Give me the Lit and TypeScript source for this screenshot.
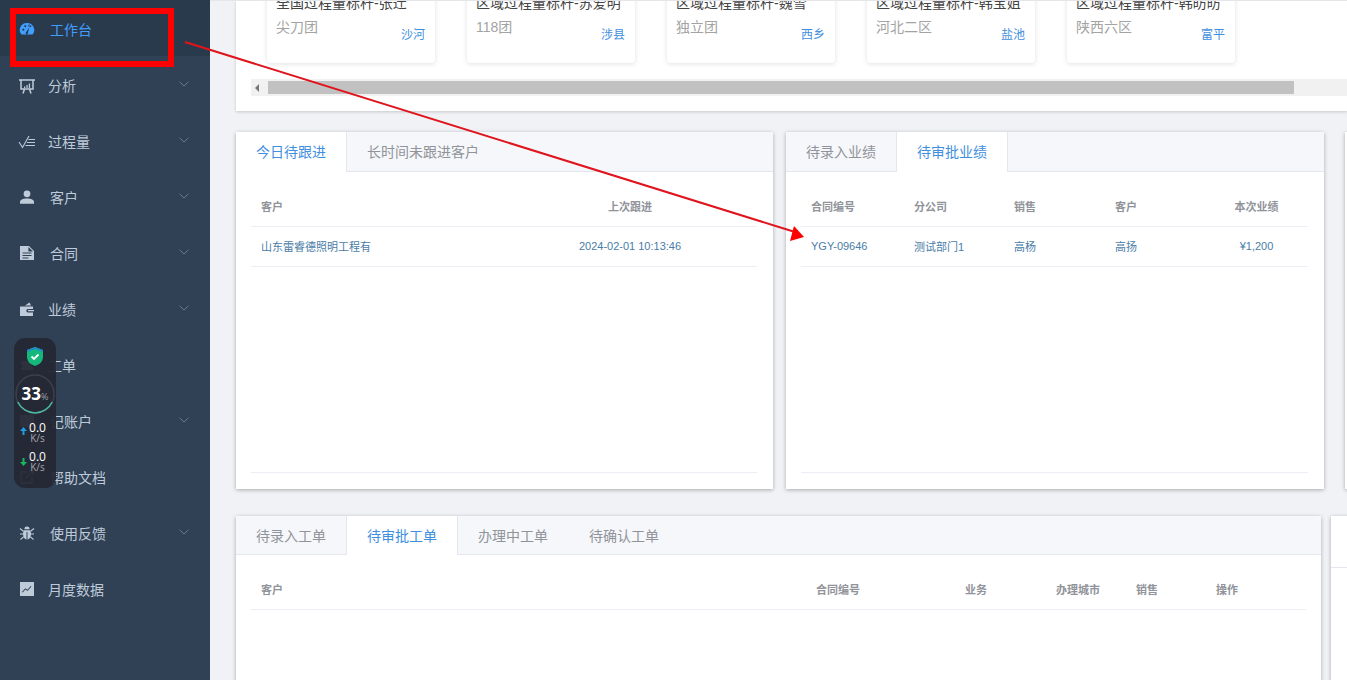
import { LitElement, html, css, svg } from 'lit';
import { customElement } from 'lit/decorators.js';

const chevron = html`<svg class="chev" viewBox="0 0 10 6"><path d="M.5.8 5 5 9.5.8" fill="none" stroke="currentColor" stroke-width=".8"/></svg>`;

const icons: Record<string, unknown> = {
  gauge: svg`<path fill-rule="evenodd" d="M7 1A7 7 0 0 0 1.500 12.600h11A7 7 0 0 0 7 1ZM2.200 7.600a1.100 1.100 0 1 1 0 .1ZM4.300 4a1 1 0 1 1 0 .1Zm4 -.4a1 1 0 1 1 0 .1Zm1 .4a1 1 0 1 1 0 .1ZM6 10.200 9.300 5.600 8 10.600a1.200 1.200 0 1 1-2-.4Z"/>`,
  board: svg`<path fill="none" stroke="currentColor" stroke-width="1.500" d="M-1 2h16M1 2.500v8.500h12V2.500M3 15.500l1.500-4.500M11 15.500 9.500 11"/><path d="M4 8.500h1.300V10H4zM6.400 7h1.300v3H6.400zM8.800 5.500h1.300V10H8.800z"/>`,
  check: svg`<path fill="none" stroke="currentColor" stroke-width="1.100" d="M-1 8l3.500 5.500L9 2M8.500 5.500h6.500M7 8.500h8M5.500 11.500h9.500"/>`,
  user: svg`<circle cx="7" cy="3.800" r="3.400"/><path d="M0 13.800V12c0-2.200 2.600-3.600 7-3.600s7 1.400 7 3.600v1.800Z"/>`,
  doc: svg`<path fill-rule="evenodd" d="M0 0h9l5 5v9H0Zm8.400 1v4.600H13ZM2.500 6.500v1h9v-1Zm0 2.600v1h9v-1Zm0 2.400v1h6v-1Z"/>`,
  wallet: svg`<path d="M5 3.500 9.500.5 11 3.500Z"/><path fill-rule="evenodd" d="M0 4.500h13v2.500H8a1.700 1.700 0 0 0 0 3.400h5V14H0Zm8 3.400h6v1.400H8Z"/>`,
  ticket: svg`<path d="M1 3h12v3a1.500 1.500 0 0 0 0 3v3H1V9a1.500 1.500 0 0 0 0-3Z"/>`,
  account: svg`<path d="M0 1h14v12H0Z"/>`,
  link: svg`<path fill="none" stroke="currentColor" stroke-width="1.300" d="M7 2H1v11h11V7M6 8l7-7M9 1h4v4"/>`,
  bug: svg`<path d="M4.400 3.200a2.600 2.600 0 0 1 5.200 0ZM3.800 4.200h6.400c.6 1 .8 2.200.8 3.600 0 3.200-1.500 5.400-3.500 5.700V6H6.500v7.500C4.500 13.200 3 11 3 7.800c0-1.400.2-2.600.8-3.600Z"/><path fill="none" stroke="currentColor" stroke-width="1.100" d="M0 2.500l3.400 2.700M14 2.500l-3.400 2.700M0 8h3M11 8h3M.5 13.500l3.300-2.800M13.500 13.500l-3.300-2.800"/>`,
  chart: svg`<path fill-rule="evenodd" d="M0 0h14v14H0Zm2.500 10.600 3-3 2 1.500 4-4.500-.7-.6-3.400 3.800-2-1.500-3.600 3.600Z"/>`,
};

const menu = [
  { icon: 'gauge', label: '工作台', gap: 16, active: true },
  { icon: 'board', label: '分析', gap: 14, more: true },
  { icon: 'check', label: '过程量', gap: 14, more: true },
  { icon: 'user', label: '客户', gap: 16, more: true },
  { icon: 'doc', label: '合同', gap: 16, more: true },
  { icon: 'wallet', label: '业绩', gap: 14, more: true },
  { icon: 'ticket', label: '工单', gap: 14 },
  { icon: 'account', label: '记账户', gap: 16, more: true },
  { icon: 'link', label: '帮助文档', gap: 16 },
  { icon: 'bug', label: '使用反馈', gap: 16, more: true },
  { icon: 'chart', label: '月度数据', gap: 14 },
];

const tiles = [
  ['全国过程量标杆-张迁', '尖刀团', '沙河'],
  ['区域过程量标杆-苏爱明', '118团', '涉县'],
  ['区域过程量标杆-魏雪', '独立团', '西乡'],
  ['区域过程量标杆-韩宝姐', '河北二区', '盐池'],
  ['区域过程量标杆-韩昉昉', '陕西六区', '富平'],
];

@customElement('app-root')
export class AppRoot extends LitElement {
  static styles = css`
    :host {
      display: flex;
      position: relative;
      width: 1347px;
      height: 680px;
      overflow: hidden;
      background: #f0f2f5;
      font-family: "Liberation Sans", "Noto Sans CJK SC", sans-serif;
    }
    .side {
      width: 210px;
      flex: none;
      background: #304156;
      color: #bfcbd9;
      font-size: 14px;
    }
    .item {
      height: 56px;
      display: flex;
      align-items: center;
      padding: 2px 0 0 20px;
      box-sizing: border-box;
      position: relative;
    }
    .item.active {
      background: #2a3a4d;
      color: #409eff;
    }
    .item .ic {
      width: 14px;
      height: 14px;
      fill: currentColor;
      flex: none;
      overflow: visible;
    }
    .chev {
      position: absolute;
      left: 179px;
      top: 25px;
      width: 10px;
      height: 6px;
      color: #7d8a9b;
    }
    .main {
      flex: 1;
      min-width: 0;
      padding-left: 26px;
      overflow: hidden;
      border-top: 1px solid #e4e6ea;
      box-sizing: border-box;
    }
    .top {
      height: 110px;
      background: #fff;
      box-shadow: 0 1px 3px rgba(0, 0, 0, .18);
      padding-left: 15px;
      overflow: hidden;
    }
    .tiles {
      display: flex;
      gap: 32px;
      margin: -38px 0 0 16px;
    }
    .tile {
      width: 168px;
      height: 100px;
      flex: none;
      box-sizing: border-box;
      padding: 30px 10px 0 9px;
      background: #fff;
      border-radius: 4px;
      box-shadow: 0 1px 5px rgba(0, 0, 0, .12);
    }
    .tile .t { font-size: 14px; line-height: 20px; color: #444; white-space: nowrap; }
    .tile .row { display: flex; justify-content: space-between; margin-top: 4px; }
    .tile .s { font-size: 14px; line-height: 20px; color: #a3a3a3; }
    .tile .c { font-size: 12px; line-height: 20px; color: #3f8fe0; margin-top: 8px; }
    .bar {
      margin-top: 16px;
      height: 17px;
      background: #f1f1f1;
      display: flex;
      align-items: center;
    }
    .bar i {
      width: 0;
      height: 0;
      margin: 0 6px 0 4px;
      border: 4px solid transparent;
      border-right: 4px solid #777;
      border-left: 0;
    }
    .bar b {
      margin-left: 3px;
      width: 1026px;
      height: 13px;
      background: #c1c1c1;
    }
    .row2 {
      display: flex;
      margin-top: 21px;
      height: 357px;
    }
    .row3 {
      display: flex;
      margin-top: 27px;
      height: 300px;
    }
    .panel {
      flex: none;
      background: #fff;
      box-shadow: 0 1px 4px rgba(0, 0, 0, .3);
      box-sizing: border-box;
    }
    .tabs {
      display: flex;
      height: 40px;
      background: #f5f7fa;
      border-bottom: 1px solid #e4e7ed;
      box-sizing: border-box;
      font-size: 14px;
      color: #909399;
    }
    .row3 .tabs { height: 39px; }
    .tabs span {
      min-width: 110.500px;
      box-sizing: border-box;
      padding: 0 20px;
      line-height: 40px;
      height: 40px;
      white-space: nowrap;
      border-right: 1px solid transparent;
    }
    .row3 .tabs span { height: 39px; }
    .tabs span.on {
      background: #fff;
      color: #3f8fe0;
      border-right-color: #e4e7ed;
    }
    .tabs span.on:not(:first-child) { box-shadow: -1px 0 0 #e4e7ed; }
    .tbl {
      margin: 0 15px;
      font-size: 11px;
      display: grid;
    }
    .tbl > div {
      border-bottom: 1px solid #ebeef5;
      padding-left: 10px;
      display: flex;
      align-items: center;
      white-space: nowrap;
    }
    .tbl .h { height: 55px; padding-top: 14px; box-sizing: border-box; color: #909399; font-weight: bold; }
    .tbl .d { height: 40px; padding-bottom: 2px; box-sizing: border-box; color: #4a7ca8; }
    .tbl .ctr { justify-content: center; padding-left: 0; }
    .tbl .end { grid-column: 1 / -1; height: 206px; box-sizing: border-box; }
    .t1 { grid-template-columns: 252px 254px; }
    .t2 { grid-template-columns: 103px 100px 101px 100px 103px; }
    .t3 { grid-template-columns: 555px 149px 91px 80px 80px 100px; }
    .overlay {
      position: absolute;
      left: 0;
      top: 0;
      width: 1347px;
      height: 680px;
      pointer-events: none;
    }
    .widget {
      position: absolute;
      left: 14px;
      top: 338px;
      width: 42px;
      height: 150px;
      border-radius: 11px;
      background: rgba(36, 39, 51, .94);
      color: #fff;
    }
    .widget svg { position: absolute; }
    .pct {
      position: absolute;
      left: 0;
      width: 42px;
      top: 45px;
      text-align: center;
      font: bold 17px/22px "Open Sans", "Liberation Sans", sans-serif;
    }
    .pct small { font-size: 9px; font-weight: normal; color: #9a9ca5; }
    .speed {
      position: absolute;
      left: 11px;
      width: 25px;
      text-align: center;
      font: 12px/10px "Open Sans", "Liberation Sans", sans-serif;
    }
    .speed small { display: block; font-size: 10px; line-height: 10px; color: #a3a5ad; }
  `;

  private tabs(names: string[], on: number) {
    return html`<div class="tabs">
      ${names.map((n, i) => html`<span class="${i === on ? 'on' : ''}">${n}</span>`)}
    </div>`;
  }

  render() {
    return html`
      <nav class="side">
        ${menu.map(m => html`<div class="item ${m.active ? 'active' : ''}">
          <svg class="ic" viewBox="0 0 14 14">${icons[m.icon]}</svg>
          <span style="margin-left:${m.gap}px">${m.label}</span>
          ${m.more ? chevron : ''}
        </div>`)}
      </nav>
      <main class="main">
        <section class="top">
          <div class="tiles">
            ${tiles.map(t => html`<div class="tile">
              <div class="t">${t[0]}</div>
              <div class="row"><span class="s">${t[1]}</span><span class="c">${t[2]}</span></div>
            </div>`)}
          </div>
          <div class="bar"><i></i><b></b></div>
        </section>
        <div class="row2">
          <section class="panel" style="width:537px">
            ${this.tabs(['今日待跟进', '长时间未跟进客户'], 0)}
            <div class="tbl t1">
              <div class="h">客户</div><div class="h ctr">上次跟进</div>
              <div class="d">山东雷睿德照明工程有</div><div class="d ctr">2024-02-01 10:13:46</div>
              <div class="end"></div>
            </div>
          </section>
          <section class="panel" style="width:538px;margin-left:13px">
            ${this.tabs(['待录入业绩', '待审批业绩'], 1)}
            <div class="tbl t2">
              <div class="h">合同编号</div><div class="h">分公司</div><div class="h">销售</div><div class="h">客户</div><div class="h ctr">本次业绩</div>
              <div class="d">YGY-09646</div><div class="d">测试部门1</div><div class="d">高杨</div><div class="d">高扬</div><div class="d ctr">¥1,200</div>
              <div class="end"></div>
            </div>
          </section>
          <section class="panel" style="width:200px;margin-left:21px"></section>
        </div>
        <div class="row3">
          <section class="panel" style="width:1085px">
            ${this.tabs(['待录入工单', '待审批工单', '办理中工单', '待确认工单'], 1)}
            <div class="tbl t3">
              <div class="h">客户</div><div class="h">合同编号</div><div class="h">业务</div><div class="h">办理城市</div><div class="h">销售</div><div class="h">操作</div>
            </div>
          </section>
          <section class="panel" style="width:200px;margin-left:10px"><div class="tabs" style="background:#fff;height:52px"></div></section>
        </div>
      </main>
      <svg class="overlay" viewBox="0 0 1347 680">
        <rect x="13" y="11" width="158" height="53" fill="none" stroke="#f00" stroke-width="6"/>
        <path d="M185 42 795 232" stroke="#e0141c" stroke-width="2"/>
        <path d="M804 237 794 226 790 241Z" fill="#f00"/>
      </svg>
      <div class="widget">
        <svg style="left:13px;top:9px" width="16" height="19" viewBox="0 0 16 19">
          <path d="M8 0 16 3v7c0 4.500-3.500 7.500-8 9-4.500-1.500-8-4.500-8-9V3Z" fill="#14b87a"/>
          <path d="M8 0 16 3v2L8 2 0 5V3Z" fill="#2388c8"/>
          <path d="M4.500 9.500 7 12l4.500-4.500" fill="none" stroke="#fff" stroke-width="1.800"/>
        </svg>
        <svg style="left:0;top:35px" width="42" height="42" viewBox="0 0 42 42">
          <circle cx="21" cy="21" r="19" fill="none" stroke="#3d404b" stroke-width="1.500"/>
          <path d="M3.800 29A19 19 0 0 0 38.200 29" fill="none" stroke="#4dbb9f" stroke-width="1.500"/>
        </svg>
        <div class="pct">33<small>%</small></div>
        <svg style="left:6px;top:89px" width="7" height="8" viewBox="0 0 7 8"><path d="M3.500 0 7 4H4.500v4h-2V4H0Z" fill="#1e9ce0"/></svg>
        <div class="speed" style="top:85px">0.0<small>K/s</small></div>
        <svg style="left:6px;top:120px" width="7" height="8" viewBox="0 0 7 8"><path d="M3.500 8 7 4H4.500V0h-2v4H0Z" fill="#14b860"/></svg>
        <div class="speed" style="top:114px">0.0<small>K/s</small></div>
      </div>
    `;
  }
}
